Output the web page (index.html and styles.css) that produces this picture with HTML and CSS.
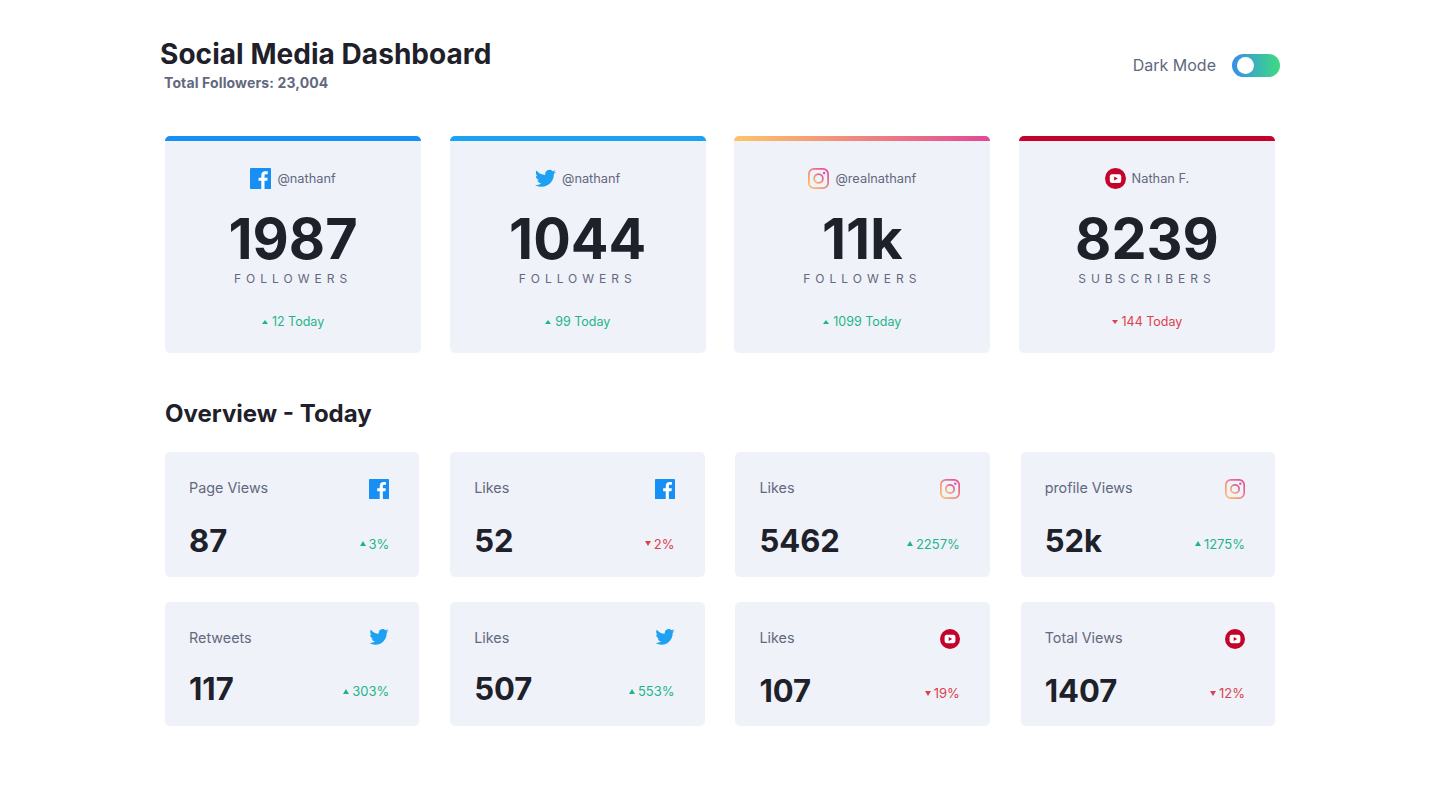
FILE: index.html
```html
<!DOCTYPE html>
<html lang="en">
<head>
<meta charset="UTF-8">
<title>Social Media Dashboard</title>
<link rel="stylesheet" href="styles.css">
</head>
<body>

<svg class="defs" width="0" height="0">
  <defs>
    <linearGradient id="igGrad" x1="0" y1="1" x2="1" y2="0">
      <stop offset="0" stop-color="#fdc468"/>
      <stop offset="1" stop-color="#df4996"/>
    </linearGradient>
    <symbol id="fb" viewBox="0 0 24 24">
      <rect width="24" height="24" rx="1" fill="#178ff5"/>
      <path fill="#fff" d="M16.6 24v-9.3h3.1l.5-3.6h-3.6V8.8c0-1 .3-1.8 1.8-1.8h1.9V3.8c-.3 0-1.5-.1-2.8-.1-2.7 0-4.6 1.7-4.6 4.7v2.7H9.8v3.6h3.1V24z"/>
    </symbol>
    <symbol id="tw" viewBox="0 0 24 20">
      <path fill="#1da1f2" transform="translate(0 -2.2)" d="M23.953 4.57a10 10 0 01-2.825.775 4.958 4.958 0 002.163-2.723c-.951.555-2.005.959-3.127 1.184a4.92 4.92 0 00-8.384 4.482C7.69 8.095 4.067 6.13 1.64 3.162a4.822 4.822 0 00-.666 2.475c0 1.71.87 3.213 2.188 4.096a4.904 4.904 0 01-2.228-.616v.06a4.923 4.923 0 003.946 4.827 4.996 4.996 0 01-2.212.085 4.936 4.936 0 004.604 3.417 9.867 9.867 0 01-6.102 2.105c-.39 0-.779-.023-1.17-.067a13.995 13.995 0 007.557 2.209c9.053 0 13.998-7.496 13.998-13.985 0-.21 0-.42-.015-.63A9.935 9.935 0 0024 4.59z"/>
    </symbol>
    <symbol id="ig" viewBox="0 0 24 24">
      <rect x="1" y="1" width="22" height="22" rx="6" fill="none" stroke="url(#igGrad)" stroke-width="2"/>
      <circle cx="12" cy="12" r="5" fill="none" stroke="url(#igGrad)" stroke-width="2"/>
      <circle cx="18.4" cy="5.6" r="1.4" fill="#df4996"/>
    </symbol>
    <symbol id="yt" viewBox="0 0 24 24">
      <circle cx="12" cy="12" r="12" fill="#c4032b"/>
      <rect x="5.5" y="7" width="13" height="10" rx="2.5" fill="#fff"/>
      <path fill="#c4032b" d="M10.4 9.6v4.8l4.2-2.4z"/>
    </symbol>
  </defs>
</svg>

<div class="page">
  <header class="top">
    <div class="titles">
      <h1>Social Media Dashboard</h1>
      <p class="total">Total Followers: 23,004</p>
    </div>
    <div class="mode">
      <span>Dark Mode</span>
      <div class="toggle"><div class="knob"></div></div>
    </div>
  </header>

  <section class="followers">
    <div class="card bar-fb">
      <div class="handle"><svg class="ico-lg"><use href="#fb"/></svg>@nathanf</div>
      <div class="big">1987</div>
      <div class="unit">FOLLOWERS</div>
      <div class="change up"><i></i>12 Today</div>
    </div>
    <div class="card bar-tw">
      <div class="handle"><svg class="ico-lg"><use href="#tw"/></svg>@nathanf</div>
      <div class="big">1044</div>
      <div class="unit">FOLLOWERS</div>
      <div class="change up"><i></i>99 Today</div>
    </div>
    <div class="card bar-ig">
      <div class="handle"><svg class="ico-lg"><use href="#ig"/></svg>@realnathanf</div>
      <div class="big">11k</div>
      <div class="unit">FOLLOWERS</div>
      <div class="change up"><i></i>1099 Today</div>
    </div>
    <div class="card bar-yt">
      <div class="handle"><svg class="ico-lg"><use href="#yt"/></svg>Nathan F.</div>
      <div class="big">8239</div>
      <div class="unit">SUBSCRIBERS</div>
      <div class="change down"><i></i>144 Today</div>
    </div>
  </section>

  <h2>Overview - Today</h2>

  <section class="overview">
    <div class="tile">
      <div class="row"><span class="label">Page Views</span><svg class="ico"><use href="#fb"/></svg></div>
      <div class="row low"><span class="num">87</span><span class="pct up"><i></i>3%</span></div>
    </div>
    <div class="tile">
      <div class="row"><span class="label">Likes</span><svg class="ico"><use href="#fb"/></svg></div>
      <div class="row low"><span class="num">52</span><span class="pct down"><i></i>2%</span></div>
    </div>
    <div class="tile">
      <div class="row"><span class="label">Likes</span><svg class="ico"><use href="#ig"/></svg></div>
      <div class="row low"><span class="num">5462</span><span class="pct up"><i></i>2257%</span></div>
    </div>
    <div class="tile">
      <div class="row"><span class="label">profile Views</span><svg class="ico"><use href="#ig"/></svg></div>
      <div class="row low"><span class="num">52k</span><span class="pct up"><i></i>1275%</span></div>
    </div>
    <div class="tile">
      <div class="row"><span class="label">Retweets</span><svg class="ico short"><use href="#tw"/></svg></div>
      <div class="row low"><span class="num">117</span><span class="pct up"><i></i>303%</span></div>
    </div>
    <div class="tile">
      <div class="row"><span class="label">Likes</span><svg class="ico short"><use href="#tw"/></svg></div>
      <div class="row low"><span class="num">507</span><span class="pct up"><i></i>553%</span></div>
    </div>
    <div class="tile">
      <div class="row"><span class="label">Likes</span><svg class="ico"><use href="#yt"/></svg></div>
      <div class="row low"><span class="num">107</span><span class="pct down"><i></i>19%</span></div>
    </div>
    <div class="tile">
      <div class="row"><span class="label">Total Views</span><svg class="ico"><use href="#yt"/></svg></div>
      <div class="row low"><span class="num">1407</span><span class="pct down"><i></i>12%</span></div>
    </div>
  </section>
</div>

</body>
</html>
```

FILE: styles.css
```css
* {
    box-sizing: border-box;
}

body {
    margin: 0;
    background: #fff;
    color: #1e202a;
    font-family: Inter, "Liberation Sans", sans-serif;
}

.defs {
    display: block;
    height: 0;
}

.page {
    width: 1110px;
    margin: 0 auto;
    padding-top: 35px;
}

/* header */
.top {
    display: flex;
    justify-content: space-between;
    align-items: center;
    height: 60px;
    margin-left: -5px;
    margin-right: -5px;
}

h1 {
    margin: 0 0 3px;
    font-size: 28px;
    line-height: 32px;
    font-weight: 700;
    letter-spacing: 0.05px;
}

.total {
    margin: 0 0 0 4px;
    font-size: 14px;
    line-height: 20px;
    font-weight: 700;
    letter-spacing: 0.13px;
    color: #63687e;
}

.mode {
    display: flex;
    align-items: center;
    gap: 16px;
    font-size: 16px;
    color: #63687e;
}

.toggle {
    width: 48px;
    height: 23px;
    padding: 3px 5px;
    border-radius: 12px;
    background: linear-gradient(to right, #378fe6, #3eda82);
}

.knob {
    width: 17px;
    height: 17px;
    border-radius: 50%;
    background: #fff;
}

/* follower cards */
.followers {
    display: grid;
    grid-template-columns: repeat(4, 1fr);
    gap: 28.5px;
    margin-top: 41px;
}

.card {
    position: relative;
    height: 217px;
    padding-top: 32px;
    overflow: hidden;
    border-radius: 5px;
    background: #eff2f9;
    text-align: center;
}

.card::before {
    content: "";
    position: absolute;
    top: 0;
    left: 0;
    right: 0;
    height: 5px;
}

.bar-fb::before { background: #178ff5; }
.bar-tw::before { background: #1da1f2; }
.bar-ig::before { background: linear-gradient(to right, #fdc468, #df4996); }
.bar-yt::before { background: #c4032b; }

.handle {
    display: flex;
    justify-content: center;
    align-items: flex-start;
    gap: 6px;
    height: 21px;
    font-size: 12.8px;
    line-height: 21px;
    color: #63687e;
}

.ico-lg {
    width: 21px;
    height: 21px;
}

.big {
    margin-top: 16px;
    font-size: 55.8px;
    line-height: 68px;
    font-weight: 700;
}

.unit {
    margin-top: -2px;
    font-size: 12px;
    line-height: 16px;
    letter-spacing: 5px;
    color: #63687e;
}

.change {
    display: flex;
    justify-content: center;
    align-items: center;
    gap: 4px;
    margin-top: 27px;
    font-size: 12.5px;
    line-height: 16px;
}

.up { color: #1eb589; }
.down { color: #dc414c; }

.change i,
.pct i {
    display: inline-block;
    width: 0;
    height: 0;
    border-left: 3.5px solid transparent;
    border-right: 3.5px solid transparent;
}

.change i {
    border-left-width: 3px;
    border-right-width: 3px;
}

.up i { border-bottom: 5px solid #1eb589; }
.down i { border-top: 5px solid #dc414c; }

.change.up i { border-bottom-width: 4px; }
.change.down i { border-top-width: 4px; }

/* overview */
h2 {
    margin: 46px 0 24px;
    font-size: 24px;
    line-height: 29px;
    font-weight: 700;
}

.overview {
    display: grid;
    grid-template-columns: repeat(4, 1fr);
    gap: 25px 30.9px;
}

.tile {
    padding: 27px 30px 16.2px 24px;
    border-radius: 5px;
    background: #eff2f9;
}

.row {
    display: flex;
    justify-content: space-between;
    align-items: flex-start;
}

.low {
    align-items: center;
    margin-top: 22.4px;
}

.label {
    font-size: 14.35px;
    line-height: 18px;
    color: #63687e;
}

.ico {
    width: 20px;
    height: 20px;
}

.ico.short {
    height: 16px;
}

.num {
    font-size: 31px;
    line-height: 39px;
    font-weight: 700;
}

.pct {
    display: flex;
    align-items: center;
    gap: 3px;
    margin-top: 6px;
    font-size: 13px;
}
```
